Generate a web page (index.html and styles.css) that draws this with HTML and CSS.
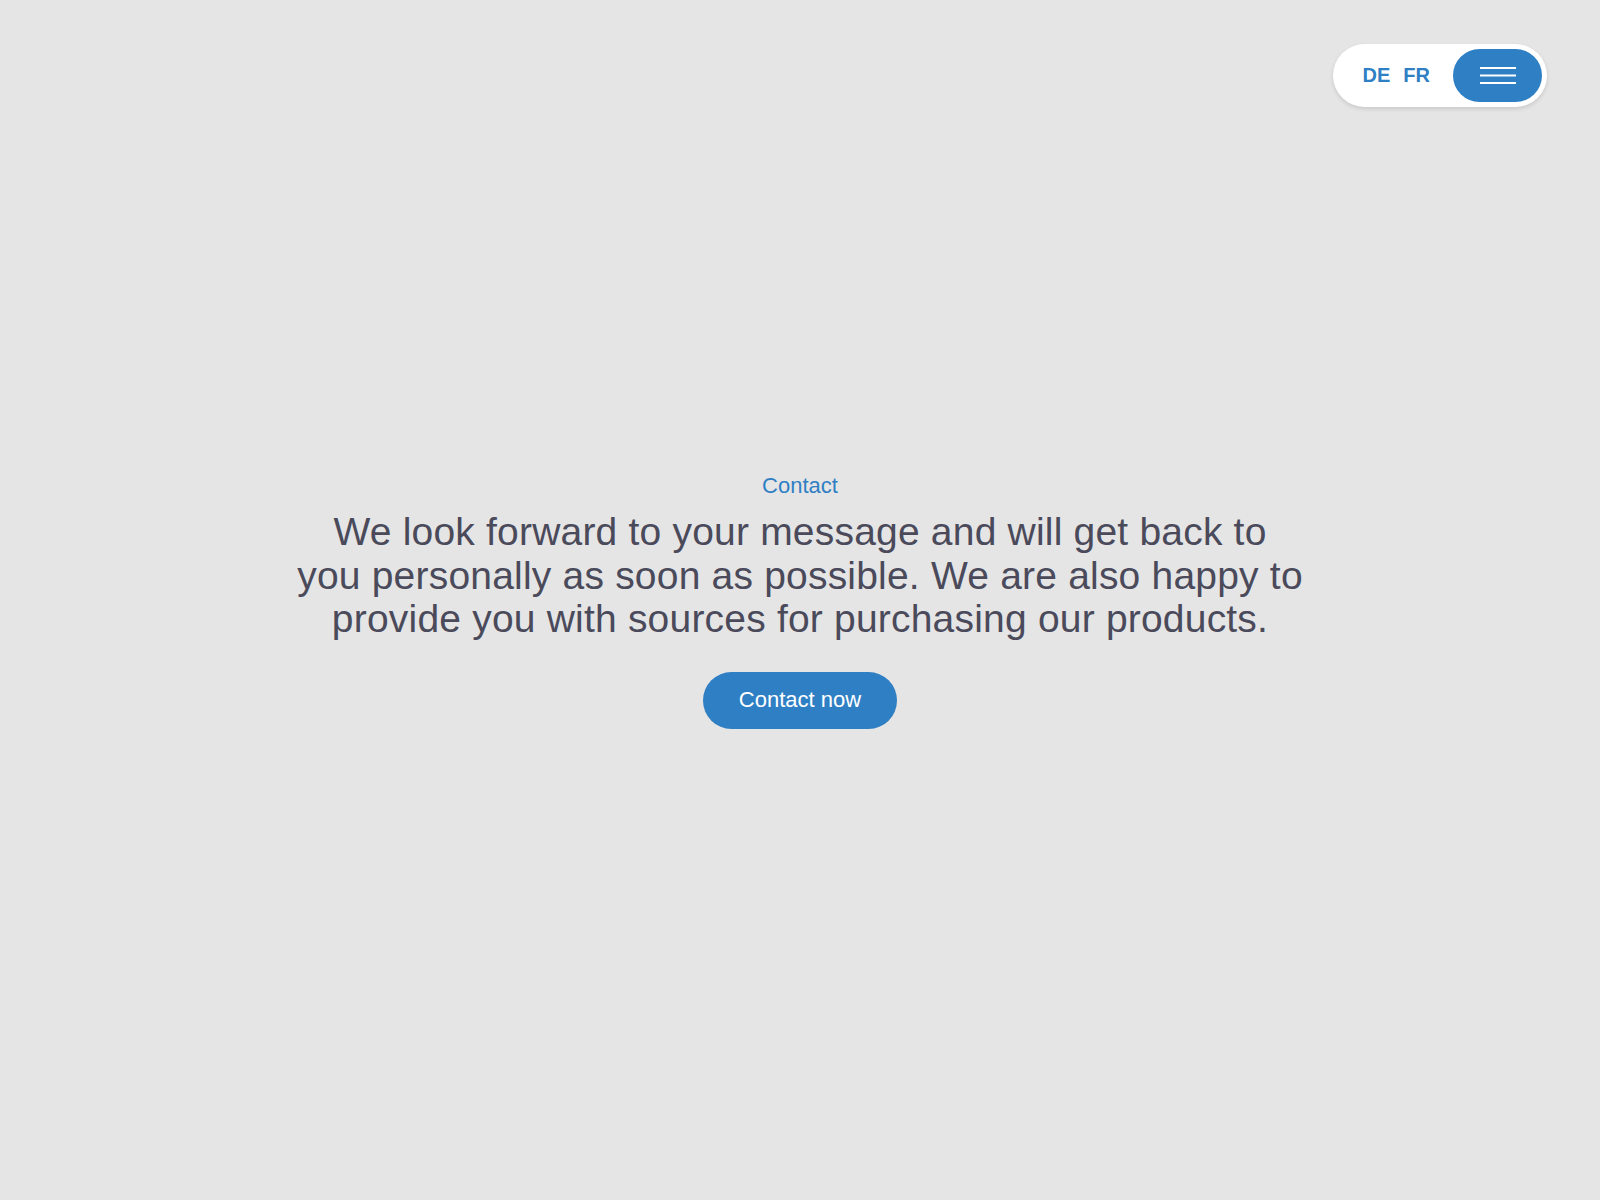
FILE: index.html
```html
<!DOCTYPE html>
<html lang="en">
<head>
<meta charset="utf-8">
<title>Contact</title>
<link rel="stylesheet" href="styles.css">
</head>
<body>
<header class="nav">
  <div class="nav-pill">
    <a class="lang" href="#">DE</a>
    <a class="lang" href="#">FR</a>
    <button class="menu-btn" aria-label="Menu">
      <svg width="36" height="18" viewBox="0 0 36 18" aria-hidden="true">
        <rect x="0" y="0" width="36" height="2" fill="#fff"/>
        <rect x="0" y="7.5" width="36" height="2" fill="#fff"/>
        <rect x="0" y="15" width="36" height="2" fill="#fff"/>
      </svg>
    </button>
  </div>
</header>
<main class="hero">
  <p class="eyebrow">Contact</p>
  <h1 class="headline">We look forward to your message and will get back to<br> you personally as soon as possible. We are also happy to<br> provide you with sources for purchasing our products.</h1>
  <a class="cta" href="#">Contact now</a>
</main>
</body>
</html>
```

FILE: styles.css
```css
* { box-sizing: border-box; }
html, body { margin: 0; padding: 0; }
body {
  background: #e5e5e5;
  font-family: "Liberation Sans", Arial, sans-serif;
  min-height: 100vh;
}
.nav {
  position: absolute;
  top: 44px;
  right: 53px;
}
.nav-pill {
  display: flex;
  align-items: center;
  background: #fff;
  border-radius: 40px;
  height: 63px;
  padding: 5px 5px 5px 30px;
  box-shadow: 0 2px 4px rgba(0,0,0,0.12);
}
.lang {
  font-weight: 700;
  font-size: 20px;
  color: #2f7fc4;
  text-decoration: none;
  margin-right: 13px;
}
.lang + .lang { margin-right: 23px; }
.menu-btn {
  width: 89px;
  height: 53px;
  border: 0;
  border-radius: 30px;
  background: #2f7fc4;
  display: flex;
  align-items: center;
  justify-content: center;
  padding: 0;
  cursor: pointer;
}
.menu-btn svg { display: block; }
.hero {
  min-height: 100vh;
  padding-top: 2px;
  display: flex;
  flex-direction: column;
  align-items: center;
  justify-content: center;
  text-align: center;
}
.eyebrow {
  margin: 0;
  font-size: 22px;
  line-height: 26px;
  color: #2f7fc4;
}
.headline {
  margin: 11px 0 0;
  max-width: 1100px;
  font-size: 39px;
  line-height: 43.5px;
  letter-spacing: 0.2px;
  font-weight: 400;
  color: #4a4a5b;
}
.cta {
  margin-top: 31px;
  display: inline-flex;
  align-items: center;
  justify-content: center;
  height: 57px;
  padding: 0 36px;
  border-radius: 30px;
  background: #2f7fc4;
  color: #fff;
  font-size: 22px;
  text-decoration: none;
}
```
